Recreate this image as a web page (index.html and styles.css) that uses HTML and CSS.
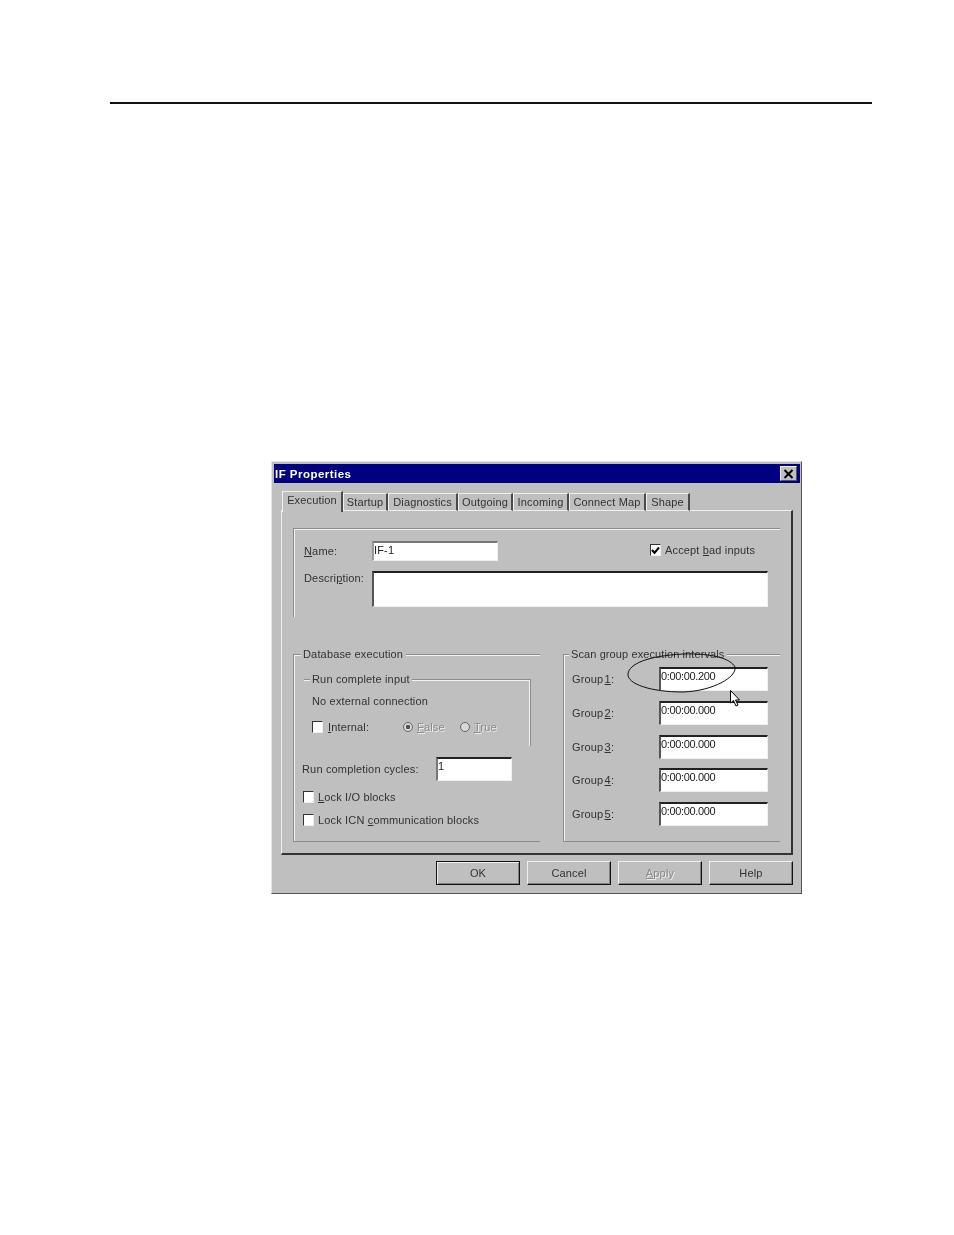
FILE: index.html
```html
<!DOCTYPE html>
<html lang="en">
<head>
<meta charset="utf-8">
<title>IF Properties</title>
<link rel="stylesheet" href="styles.css">
</head>
<body>
<div class="rule"></div>
<div class="dialog">
  <div class="titlebar">
    <span class="title">IF Properties</span>
    <span class="close"><svg width="11" height="10" viewBox="0 0 11 10"><path d="M1.5 1 L9.5 9 M9.5 1 L1.5 9" stroke="#000" stroke-width="2" fill="none"/></svg></span>
  </div>
  <div class="tabs">
    <span class="tab active w61">Execution</span>
    <span class="tab w45">Startup</span>
    <span class="tab w70">Diagnostics</span>
    <span class="tab w55">Outgoing</span>
    <span class="tab w56">Incoming</span>
    <span class="tab w77">Connect Map</span>
    <span class="tab w44">Shape</span>
  </div>
  <div class="panel">
    <div class="name-group">
      <div class="name-row">
        <span class="label-w"><u>N</u>ame:</span>
        <span class="input name-input">IF-1</span>
        <label class="accept"><span class="check checked"><svg width="9" height="9" viewBox="0 0 9 9"><path d="M1 4 L3.5 7 L8 1.5" stroke="#000" stroke-width="2" fill="none"/></svg></span><span>Accept <u>b</u>ad inputs</span></label>
      </div>
      <div class="desc-row">
        <span class="label-w">Descri<u>p</u>tion:</span>
        <span class="input desc-input"></span>
      </div>
    </div>
    <div class="lower">
      <div class="group db-group">
        <span class="legend db-legend">Database execution</span>
        <div class="run-group">
          <span class="legend run-legend">Run complete input</span>
          <div class="no-conn">No external connection</div>
          <div class="internal-row">
            <span class="check"></span><span class="internal-label"><u>I</u>nternal:</span>
            <span class="radio selected"></span><span class="disabled radio-false"><u>F</u>alse</span>
            <span class="radio"></span><span class="disabled"><u>T</u>rue</span>
          </div>
        </div>
        <div class="cycles-row">
          <span class="cycles-label">Run completion cycles:</span>
          <span class="input cycles-input">1</span>
        </div>
        <div class="lock-row lock-first"><span class="check"></span><span><u>L</u>ock I/O blocks</span></div>
        <div class="lock-row lock-second"><span class="check"></span><span>Lock ICN <u>c</u>ommunication blocks</span></div>
      </div>
      <div class="group scan-group">
        <span class="legend scan-legend">Scan group execution intervals</span>
        <div class="scan-rows">
          <div class="scan-row"><span class="scan-label">Group <u>1</u>:</span><span class="input scan-input">0:00:00.200</span></div>
          <div class="scan-row"><span class="scan-label">Group <u>2</u>:</span><span class="input scan-input">0:00:00.000</span></div>
          <div class="scan-row"><span class="scan-label">Group <u>3</u>:</span><span class="input scan-input">0:00:00.000</span></div>
          <div class="scan-row"><span class="scan-label">Group <u>4</u>:</span><span class="input scan-input">0:00:00.000</span></div>
          <div class="scan-row"><span class="scan-label">Group <u>5</u>:</span><span class="input scan-input">0:00:00.000</span></div>
        </div>
      </div>
    </div>
  </div>
  <div class="buttons">
    <span class="btn default">OK</span>
    <span class="btn">Cancel</span>
    <span class="btn disabled-btn"><u>A</u>pply</span>
    <span class="btn">Help</span>
  </div>
  <svg class="ellipse" width="114" height="44" viewBox="0 0 114 44"><path d="M3 23 C4 13 22 5 58 3 C88 2 106 8 110 16 C112 26 88 40 58 41 C26 41 2 33 3 23 Z" fill="none" stroke="#111" stroke-width="1"/></svg>
  <svg class="cursor" width="12" height="18" viewBox="0 0 12 18"><path d="M0.5 0.5 L0.5 13 L3.5 10.5 L6 16 L8 15 L5.5 10 L9.5 10 Z" fill="#fff" stroke="#000" stroke-width="1"/></svg>
</div>
</body>
</html>
```
FILE: styles.css
```css
* { box-sizing: border-box; }
html, body { margin: 0; padding: 0; background: #fff; }
body { width: 954px; height: 1235px; overflow: hidden; font-family: "Liberation Sans", Arial, sans-serif; font-size: 11px; color: #333; letter-spacing: 0.16px; }
u { text-underline-offset: 1px; }
.rule { height: 2px; width: 762px; margin: 102px 0 0 110px; background: #111; }

.dialog { position: relative; width: 531px; height: 433px; margin: 357px 0 0 271px; padding: 2px 1px 0 2px; background: #bfbfbf; border: 1px solid #555; border-top-color: #e4e4e4; border-left-color: #e4e4e4; filter: blur(0.3px); }

.titlebar { display: flex; align-items: center; justify-content: space-between; height: 19px; padding: 0 3px 0 1px; background: #000080; }
.title { color: #fff; font-weight: bold; font-size: 11.5px; letter-spacing: 0.47px; }
.close { display: flex; align-items: center; justify-content: center; width: 17px; height: 15px; background: #c0c0c0; border: 1px solid #555; border-top-color: #eee; border-left-color: #eee; }

.tabs { display: flex; align-items: flex-end; height: 20px; margin: 8px 0 0 8px; position: relative; z-index: 1; }
.tab { display: flex; align-items: center; justify-content: center; height: 18px; border: 1px solid #efefef; border-right: 2px solid #4a4a4a; background: #bfbfbf; padding-bottom: 1px; }
.tab.active { height: 21px; margin-bottom: -1px; border-bottom: none; padding-bottom: 4px; }
.w61 { width: 61px; } .w45 { width: 45px; } .w70 { width: 70px; } .w55 { width: 55px; } .w56 { width: 56px; } .w77 { width: 77px; } .w44 { width: 44px; }

.panel { width: 512px; height: 345px; margin: -1px 0 0 7px; padding: 17px 0 0 11px; border: 1px solid #efefef; border-right: 2px solid #333; border-bottom: 2px solid #333; }

.name-group { width: 487px; height: 89px; padding: 12px 0 0 10px; border-top: 1px solid #8c8c8c; border-left: 1px solid #8c8c8c; box-shadow: inset 1px 1px 0 #f2f2f2; }
.name-row { display: flex; align-items: center; height: 20px; }
.desc-row { display: flex; align-items: flex-start; height: 36px; margin-top: 10px; }
.label-w { width: 68px; flex: none; }
.desc-row .label-w { padding-top: 1px; }
.input { display: block; flex: none; padding: 1px 0 0 0; background: #fff; border: 1px solid #efefef; border-top: 2px solid #222; border-left: 2px solid #555; color: #222; line-height: 13px; }
.name-input { width: 126px; height: 20px; border-top-color: #777; border-left-color: #999; }
.desc-input { width: 396px; height: 36px; }
.accept { display: flex; align-items: center; gap: 4px; margin-left: 152px; padding-bottom: 2px; }

.check { display: flex; align-items: center; justify-content: center; flex: none; width: 11px; height: 12px; background: #fff; border: 1px solid #efefef; border-top: 1px solid #333; border-left: 1px solid #333; }

.lower { display: flex; gap: 23px; margin-top: 37px; }
.group { height: 188px; border: 1px solid #8c8c8c; border-right: none; box-shadow: inset 1px 1px 0 #f2f2f2; }
.legend { display: inline-block; background: #bfbfbf; padding: 0 3px 0 2px; margin-top: -7px; line-height: 13px; vertical-align: top; }
.db-group { width: 247px; padding-left: 9px; }
.db-legend { margin-left: -2px; }
.scan-group { width: 217px; }
.scan-legend { margin-left: 5px; letter-spacing: 0.1px; }

.run-group { width: 227px; height: 67px; margin: 12px 0 0 1px; padding-left: 8px; border-top: 1px solid #8c8c8c; border-right: 1px solid #8c8c8c; box-shadow: inset -1px 1px 0 #f2f2f2; }
.run-legend { padding: 0 2px; margin-left: -2px; }
.no-conn { margin-top: 3px; line-height: 13px; }
.internal-row { display: flex; align-items: center; height: 14px; margin-top: 12px; }
.internal-label { margin: 0 40px 0 5px; width: 35px; }
.radio { flex: none; width: 10px; height: 10px; border-radius: 50%; background: #d8d8d8; border: 1px solid #666; margin-right: 4px; }
.radio.selected { background: radial-gradient(circle, #555 0 2px, #d8d8d8 2.5px); }
.disabled { color: #8a8a8a; text-shadow: 1px 1px 0 #eee; }
.radio-false { width: 43px; }

.cycles-row { display: flex; align-items: center; height: 24px; margin-top: 11px; margin-left: -1px; }
.cycles-label { width: 134px; flex: none; }
.cycles-input { width: 76px; height: 24px; border-left-color: #777; }
.lock-row { display: flex; align-items: center; gap: 4px; height: 14px; }
.lock-first { margin-top: 9px; }
.lock-second { margin-top: 9px; }

.scan-rows { display: flex; flex-direction: column; gap: 9.75px; padding: 0 0 0 8px; }
.scan-row { display: flex; align-items: center; height: 24px; }
.scan-label { width: 87px; flex: none; word-spacing: -2px; }
.scan-input { width: 109px; height: 24px; letter-spacing: -0.35px; }

.buttons { display: flex; justify-content: flex-end; gap: 7px; width: 519px; margin-top: 6px; }
.btn { display: flex; align-items: center; justify-content: center; width: 84px; height: 24px; border: 1px solid #efefef; border-right-color: #111; border-bottom-color: #111; box-shadow: inset -1px -1px 0 #808080; }
.btn.default { border: 1px solid #111; box-shadow: inset 1px 1px 0 #efefef, inset -1px -1px 0 #808080; }
.disabled-btn { color: #8a8a8a; text-shadow: 1px 1px 0 #eee; }

.ellipse { position: absolute; left: 353px; top: 189px; }
.cursor { position: absolute; left: 458px; top: 228px; }
```
